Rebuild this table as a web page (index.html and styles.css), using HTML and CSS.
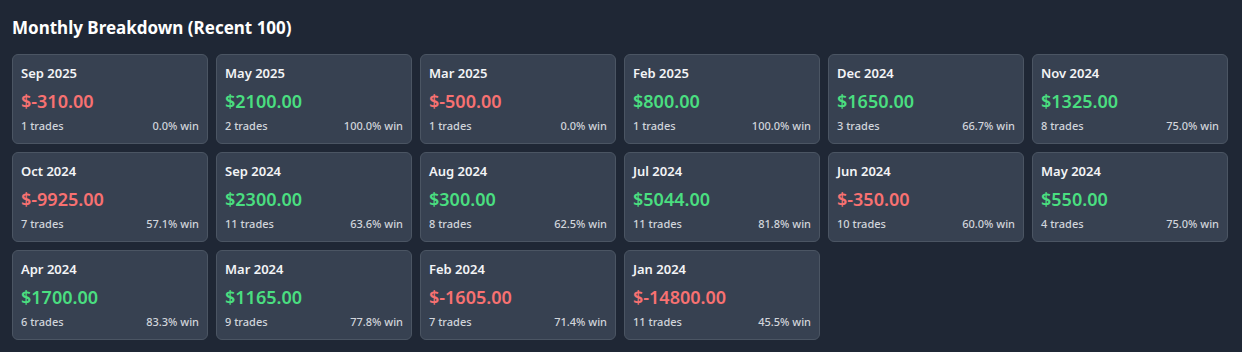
FILE: index.html
```html
<!DOCTYPE html>
<html lang="en">
<head>
<meta charset="utf-8">
<title>Monthly Breakdown</title>
<link rel="stylesheet" href="styles.css">
</head>
<body>
<section class="panel">
  <h2 class="title">Monthly Breakdown (Recent 100)</h2>
  <div class="grid">
    <div class="card"><div class="month">Sep 2025</div><div class="amount neg">$-310.00</div><div class="meta"><span>1 trades</span><span>0.0% win</span></div></div>
    <div class="card"><div class="month">May 2025</div><div class="amount pos">$2100.00</div><div class="meta"><span>2 trades</span><span>100.0% win</span></div></div>
    <div class="card"><div class="month">Mar 2025</div><div class="amount neg">$-500.00</div><div class="meta"><span>1 trades</span><span>0.0% win</span></div></div>
    <div class="card"><div class="month">Feb 2025</div><div class="amount pos">$800.00</div><div class="meta"><span>1 trades</span><span>100.0% win</span></div></div>
    <div class="card"><div class="month">Dec 2024</div><div class="amount pos">$1650.00</div><div class="meta"><span>3 trades</span><span>66.7% win</span></div></div>
    <div class="card"><div class="month">Nov 2024</div><div class="amount pos">$1325.00</div><div class="meta"><span>8 trades</span><span>75.0% win</span></div></div>
    <div class="card"><div class="month">Oct 2024</div><div class="amount neg">$-9925.00</div><div class="meta"><span>7 trades</span><span>57.1% win</span></div></div>
    <div class="card"><div class="month">Sep 2024</div><div class="amount pos">$2300.00</div><div class="meta"><span>11 trades</span><span>63.6% win</span></div></div>
    <div class="card"><div class="month">Aug 2024</div><div class="amount pos">$300.00</div><div class="meta"><span>8 trades</span><span>62.5% win</span></div></div>
    <div class="card"><div class="month">Jul 2024</div><div class="amount pos">$5044.00</div><div class="meta"><span>11 trades</span><span>81.8% win</span></div></div>
    <div class="card"><div class="month">Jun 2024</div><div class="amount neg">$-350.00</div><div class="meta"><span>10 trades</span><span>60.0% win</span></div></div>
    <div class="card"><div class="month">May 2024</div><div class="amount pos">$550.00</div><div class="meta"><span>4 trades</span><span>75.0% win</span></div></div>
    <div class="card"><div class="month">Apr 2024</div><div class="amount pos">$1700.00</div><div class="meta"><span>6 trades</span><span>83.3% win</span></div></div>
    <div class="card"><div class="month">Mar 2024</div><div class="amount pos">$1165.00</div><div class="meta"><span>9 trades</span><span>77.8% win</span></div></div>
    <div class="card"><div class="month">Feb 2024</div><div class="amount neg">$-1605.00</div><div class="meta"><span>7 trades</span><span>71.4% win</span></div></div>
    <div class="card"><div class="month">Jan 2024</div><div class="amount neg">$-14800.00</div><div class="meta"><span>11 trades</span><span>45.5% win</span></div></div>
  </div>
</section>
</body>
</html>
```
FILE: styles.css
```css
html, body {
  margin: 0;
  background: #1f2735;
}
body {
  font-family: "Noto Sans", "Open Sans", sans-serif;
  color: #f3f4f6;
}
.panel {
  padding: 16px 14px 12px 12px;
}
.title {
  margin: 0 0 14px 0;
  font-size: 17px;
  line-height: 24px;
  font-weight: 700;
  color: #ffffff;
}
.grid {
  display: grid;
  grid-template-columns: repeat(6, 1fr);
  gap: 8px;
}
.card {
  background: #374151;
  border: 1px solid #4b5563;
  border-radius: 6px;
  padding: 8px 8px 9px;
  display: flex;
  flex-direction: column;
  height: 71px;
}
.month {
  font-size: 13px;
  line-height: 20px;
  font-weight: 600;
  color: #f3f4f6;
}
.amount {
  margin-top: 5px;
  font-size: 18px;
  line-height: 26px;
  font-weight: 600;
}
.neg { color: #f87171; }
.pos { color: #4ade80; }
.meta {
  margin-top: auto;
  display: flex;
  justify-content: space-between;
  font-size: 11px;
  line-height: 16px;
  font-weight: 500;
  color: #d1d5db;
}
```
